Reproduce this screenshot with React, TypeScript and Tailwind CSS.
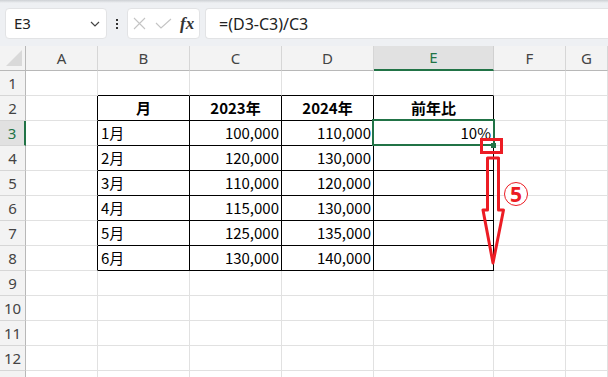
const cols = ["A", "B", "C", "D", "E", "F", "G"];

const data: Record<number, string[]> = {
  2: ["月", "2023年", "2024年", "前年比"],
  3: ["1月", "100,000", "110,000", "10%"],
  4: ["2月", "120,000", "130,000", ""],
  5: ["3月", "110,000", "120,000", ""],
  6: ["4月", "115,000", "130,000", ""],
  7: ["5月", "125,000", "135,000", ""],
  8: ["6月", "130,000", "140,000", ""],
};

const rows = [1, 2, 3, 4, 5, 6, 7, 8, 9, 10, 11, 12, 13];

function Cell({ r, c }: { r: number; c: number }) {
  // c: 0 = A ... 6 = G
  const inTable = r >= 2 && r <= 8;
  const rightBlack = inTable && c <= 4;
  const bottomBlack = c >= 1 && c <= 4 && r >= 1 && r <= 8;
  const text = inTable && c >= 1 && c <= 4 ? data[r][c - 1] : "";
  const header = r === 2;
  const align = header
    ? "justify-center font-bold"
    : c === 1
      ? "justify-start pl-[3px]"
      : "justify-end pr-[2px]";

  return (
    <div
      className={`h-[25px] flex items-center border-r border-b text-[15px] text-black whitespace-nowrap overflow-hidden ${align} ${
        rightBlack ? "border-r-black" : "border-r-[#e1e1e1]"
      } ${bottomBlack ? "border-b-black" : "border-b-[#e1e1e1]"}`}
    >
      {text}
    </div>
  );
}

export default function App() {
  return (
    <div className="relative w-[608px] h-[377px] overflow-hidden bg-white font-['Noto_Sans_CJK_JP','Noto_Sans',sans-serif]">
      {/* formula bar */}
      <div className="h-[46px] bg-[#eef0f3]">
        <div className="h-[3px] bg-gradient-to-b from-[#cdd0d4] to-[#eef0f3]"></div>
        <div className="flex items-start pt-[5px] pl-[5px]">
          <div className="w-[102px] h-[31px] rounded-[4px] bg-white border border-[#e2e3e5] flex items-center justify-between pl-[8px] pr-[6px]">
            <span className="text-[15px] text-[#222] font-['Noto_Sans',sans-serif]">E3</span>
            <svg width="10" height="6" viewBox="0 0 10 6">
              <path d="M1 1 L5 5 L9 1" fill="none" stroke="#444" strokeWidth="1.2" />
            </svg>
          </div>
          <div className="w-[20px] h-[31px] flex flex-col items-center justify-center gap-[2px]">
            <span className="w-[2px] h-[2px] bg-[#333]"></span>
            <span className="w-[2px] h-[2px] bg-[#333]"></span>
            <span className="w-[2px] h-[2px] bg-[#333]"></span>
          </div>
          <div className="w-[73px] h-[31px] rounded-[4px] bg-white border border-[#e2e3e5] flex items-center pl-[5px] gap-[9px]">
            <svg width="13" height="13" viewBox="0 0 13 13">
              <path d="M1 1 L12 12 M12 1 L1 12" stroke="#c4c4c4" strokeWidth="1.1" />
            </svg>
            <svg width="17" height="11" viewBox="0 0 17 11">
              <path d="M1 5 L6 10 L16 1" fill="none" stroke="#c4c4c4" strokeWidth="1.1" />
            </svg>
            <span className="text-[17px] leading-none text-[#333] italic font-['Liberation_Serif',serif] font-bold -ml-[1px]">
              fx
            </span>
          </div>
          <div className="ml-[5px] flex-1 h-[31px] rounded-l-[4px] bg-white border border-r-0 border-[#e2e3e5] flex items-center pl-[13px]">
            <span className="text-[16px] text-[#222] font-['Noto_Sans',sans-serif]">=(D3-C3)/C3</span>
          </div>
        </div>
      </div>

      {/* sheet */}
      <div className="grid grid-cols-[26px_72px_92px_92px_92px_120px_72px_1fr]">
        {/* column headers */}
        <div className="relative h-[25px] bg-[#f3f3f3] border-r border-b border-r-[#b8b8b8] border-b-[#b8b8b8]">
          <svg className="absolute left-[6px] top-[4px]" width="16" height="16" viewBox="0 0 16 16">
            <path d="M16 0 L16 16 L0 16 Z" fill="#d9d9d9" />
          </svg>
        </div>
        {cols.map((c) =>
          c === "E" ? (
            <div
              key={c}
              className="h-[25px] bg-[#e1e1e1] border-r border-b-[2px] border-r-[#d0d0d0] border-b-[#217346] flex items-center justify-center text-[15px] text-[#217346] font-['Noto_Sans',sans-serif]"
            >
              {c}
            </div>
          ) : (
            <div
              key={c}
              className="h-[25px] bg-[#f3f3f3] border-r border-b border-r-[#d6d6d6] border-b-[#b8b8b8] flex items-center justify-center text-[15px] text-[#444] font-['Noto_Sans',sans-serif]"
            >
              {c}
            </div>
          )
        )}

        {rows.map((r) => [
          r === 3 ? (
            <div
              key={`h${r}`}
              className="h-[25px] bg-[#e1e1e1] border-r-[2px] border-b border-r-[#217346] border-b-[#d6d6d6] flex items-center justify-center text-[15px] text-[#217346] font-['Noto_Sans',sans-serif]"
            >
              {r}
            </div>
          ) : (
            <div
              key={`h${r}`}
              className="h-[25px] bg-[#f3f3f3] border-r border-b border-r-[#b8b8b8] border-b-[#d6d6d6] flex items-center justify-center text-[15px] text-[#444] font-['Noto_Sans',sans-serif]"
            >
              {r < 13 ? r : ""}
            </div>
          ),
          ...cols.map((_, c) => <Cell key={`${r}-${c}`} r={r} c={c} />),
        ])}
      </div>

      {/* active cell border */}
      <div className="absolute left-[372px] top-[119px] w-[123px] h-[27px] border-2 border-[#217346] pointer-events-none"></div>
      <div className="absolute left-[491px] top-[143px] w-[5px] h-[5px] bg-[#217346] pointer-events-none"></div>

      {/* annotation */}
      <svg className="absolute left-0 top-0 pointer-events-none" width="608" height="377" viewBox="0 0 608 377">
        <rect x="481.5" y="139.5" width="20" height="13" fill="none" stroke="#ec1c24" strokeWidth="3" />
        <path
          d="M487.5 158 L498.5 158 L498.5 210 L503.5 210 L493 263 L483 210 L487.5 210 Z"
          fill="none"
          stroke="#ec1c24"
          strokeWidth="3"
          strokeLinejoin="round"
        />
      </svg>
      <div className="absolute left-[504px] top-[182px] w-[24px] h-[24px] rounded-full border-[1.5px] border-[#ec1c24] bg-white flex items-center justify-center pointer-events-none">
        <span className="text-[21px] leading-none font-bold text-[#ec1c24] font-['Noto_Sans',sans-serif]">5</span>
      </div>
    </div>
  );
}
